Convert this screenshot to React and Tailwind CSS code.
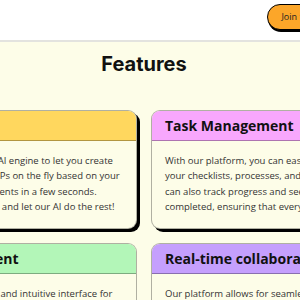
import React from "react";

const features = [
    {
        title: "AI Generation",
        header: "bg-[#ffd75e]",
        raised: true,
        lines: [
            "Use our state-of-the-art AI engine to let you create",
            "simple checklists and SOPs on the fly based on your",
            "exact business requirements in a few seconds.",
            "Just tell it what you need and let our AI do the rest!",
        ],
    },
    {
        title: "Task Management",
        header: "bg-[#f8a7fd]",
        raised: true,
        lines: [
            "With our platform, you can easily manage all of",
            "your checklists, processes, and SOPs in one place. You",
            "can also track progress and see when tasks are",
            "completed, ensuring that everything runs smoothly.",
        ],
    },
    {
        title: "Easy Management",
        header: "bg-[#b3f6b8]",
        raised: false,
        lines: [
            "Try out the user-friendly and intuitive interface for",
            "creating and editing your SOPs and checklists.",
            "No training required to get started.",
            "",
        ],
    },
    {
        title: "Real-time collaboration",
        header: "bg-[#c59ffd]",
        raised: false,
        lines: [
            "Our platform allows for seamless collaboration",
            "between team members, so everyone stays on",
            "the same page at all times.",
            "",
        ],
    },
];

export default function App() {
    return (
        <div className="w-[300px] h-[300px] overflow-hidden bg-[#fdfde8]" style={{ fontFamily: "'Open Sans', sans-serif" }}>
            <div className="w-[534px] -ml-[123px]">
                {/* Top bar */}
                <header className="h-[42px] bg-white border-b-2 border-[#e3e3df] flex justify-end items-start pt-[4px] pr-[52px]">
                    <button className="h-[26px] px-[13px] rounded-full bg-[#fca629] border border-black shadow-[1px_2px_0_#000] text-[9px] font-medium text-[#222] whitespace-nowrap">
                        Join the waitlist
                    </button>
                </header>

                {/* Features */}
                <section className="pt-[8px]">
                    <h2 className="text-center text-[20px] leading-[28px] font-bold text-[#111] font-['Inter',sans-serif]">
                        Features
                    </h2>
                    <div className="grid grid-cols-2 gap-[14px] mt-[32px]">
                        {features.map((f) => (
                            <FeatureCard key={f.title} {...f} />
                        ))}
                    </div>
                </section>
            </div>
        </div>
    );
}

function FeatureCard({ title, header, raised, lines }) {
    return (
        <div className={`rounded-[9px] border border-black/30 bg-[#fdfde8] overflow-hidden ${raised ? "shadow-[3px_3px_0_#000]" : ""}`}>
            <div className={`h-[30px] flex items-center px-[13px] border-b border-black/30 ${header}`}>
                <h3 className="text-[14px] font-bold text-[#111] whitespace-nowrap">{title}</h3>
            </div>
            <div className="px-[13px] pt-[12px] pb-[14px] text-[9.5px] leading-[15.3px] text-[#333] whitespace-nowrap">
                {lines.map((line, i) => (
                    <div key={i} className="h-[15.3px]">{line}</div>
                ))}
            </div>
        </div>
    );
}
